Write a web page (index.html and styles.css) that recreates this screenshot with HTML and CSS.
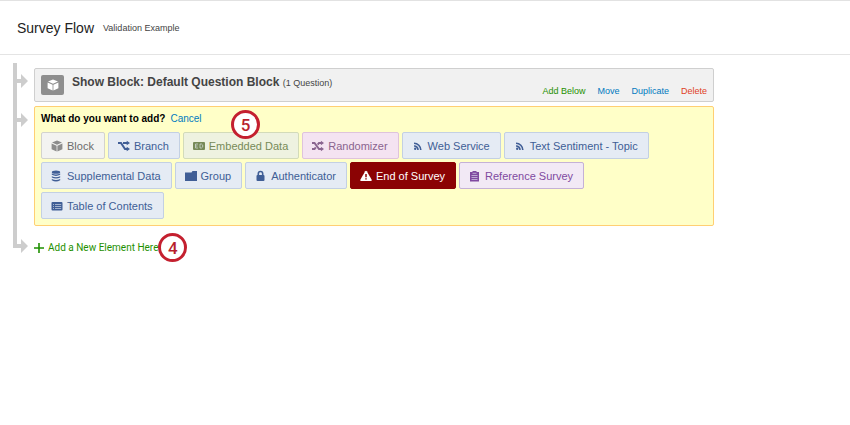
FILE: index.html
```html
<!DOCTYPE html>
<html lang="en">
<head>
    <meta charset="UTF-8">
    <title>Survey Flow</title>
    <meta name="viewport" content="width=device-width, initial-scale=1.0">
    <link rel="stylesheet" href="styles.css">
</head>
<body>

    <header class="page-header">
        <h1>Survey Flow</h1>
        <span class="survey-name">Validation Example</span>
    </header>

    <main class="flow">
        <div class="flow-row">
            <div class="track">
                <svg class="arrow" viewBox="0 0 11 14"><path d="M0 5h4V0l7 7-7 7V9H0z"/></svg>
            </div>
            <section class="block">
                <span class="block-icon">
                    <svg viewBox="0 0 12 12"><path d="M6 .6 11 2.6 6 4.8 1 2.6zM.6 3.5 5.6 5.7v5.9L.6 9.3zM11.4 3.5 6.4 5.7v5.9l5-2.3z"/></svg>
                </span>
                <h2>Show Block: Default Question Block <small>(1 Question)</small></h2>
                <nav class="block-actions">
                    <a class="add" href="#">Add Below</a>
                    <a href="#">Move</a>
                    <a href="#">Duplicate</a>
                    <a class="delete" href="#">Delete</a>
                </nav>
            </section>
        </div>

        <div class="flow-row">
            <div class="track">
                <svg class="arrow" viewBox="0 0 11 14"><path d="M0 5h4V0l7 7-7 7V9H0z"/></svg>
            </div>
            <section class="picker">
                <div class="picker-head">
                    <h3>What do you want to add?</h3>
                    <a href="#">Cancel</a>
                </div>
                <span class="callout callout-over">5</span>
                <div class="elements">
                    <button class="element gray">
                        <svg viewBox="0 0 12 12"><path d="M6 .6 11 2.6 6 4.8 1 2.6zM.6 3.5 5.6 5.7v5.9L.6 9.3zM11.4 3.5 6.4 5.7v5.9l5-2.3z"/></svg>
                        Block
                    </button>
                    <button class="element">
                        <svg viewBox="0 0 12 12"><path class="line" d="M0 3h3l4 6h2.5M5 3h4.5"/><path d="M8.7.7 12 3 8.7 5.3zM8.7 6.7 12 9l-3.3 2.3z"/></svg>
                        Branch
                    </button>
                    <button class="element green">
                        <svg viewBox="0 0 12 12"><rect y="2" width="12" height="8" rx="1"/><path class="cut" d="M5 4H2.500v4H5M2.500 6H4.500M7 4h1.500l1.200 1v2l-1.200 1H7z"/></svg>
                        Embedded Data
                    </button>
                    <button class="element pink">
                        <svg viewBox="0 0 12 12"><path class="line" d="M0 3h2.500l4.500 6h2.500M0 9h2.500l1.300-1.700M5.700 4.700 7 3h2.500"/><path d="M8.900.7 12 3 8.900 5.300zM8.900 6.700 12 9l-3.100 2.300z"/></svg>
                        Randomizer
                    </button>
                    <button class="element">
                        <svg viewBox="0 0 12 12"><circle cx="3.200" cy="8.800" r="1.200"/><path class="thin" d="M2 6a3.800 3.800 0 0 1 4 4M2 3.200a6.800 6.800 0 0 1 6.800 6.800"/></svg>
                        Web Service
                    </button>
                    <button class="element">
                        <svg viewBox="0 0 12 12"><circle cx="3.200" cy="8.800" r="1.200"/><path class="thin" d="M2 6a3.800 3.800 0 0 1 4 4M2 3.200a6.800 6.800 0 0 1 6.800 6.800"/></svg>
                        Text Sentiment - Topic
                    </button>
                    <button class="element">
                        <svg viewBox="0 0 12 12"><ellipse cx="5" cy="2.200" rx="4.200" ry="1.600"/><path d="M.8 3.500q4.200 2 8.400 0v1.300q-4.200 2.200-8.400 0zM.8 6.200q4.200 2 8.400 0v1.300q-4.200 2.200-8.400 0zM.8 8.900q4.200 2 8.400 0v1.300q-4.200 2.600-8.400 0z"/></svg>
                        Supplemental Data
                    </button>
                    <button class="element">
                        <svg viewBox="0 0 12 12"><path d="M0 2.500h6.500l1-1.500H12v10H0z"/></svg>
                        Group
                    </button>
                    <button class="element">
                        <svg viewBox="0 0 12 12"><rect x="1.500" y="5" width="8" height="6" rx="1"/><path class="thin" d="M3.300 5.500V3.700a2.200 2.200 0 0 1 4.400 0v1.800"/></svg>
                        Authenticator
                    </button>
                    <button class="element red">
                        <svg viewBox="0 0 12 12"><path d="M6 .8q.5 0 .8.5l4.900 8.500q.4 1.200-.8 1.200H1.100q-1.200 0-.8-1.200l4.900-8.500Q5.500.8 6 .8z"/><path class="cut" d="M6 4v3.300M6 8.300v1.200"/></svg>
                        End of Survey
                    </button>
                    <button class="element purple">
                        <svg viewBox="0 0 12 12"><path d="M1 2h2.500V1h4v1H10v9.500H1z"/><path class="cut" d="M3.500 3.300h4M2.500 5.500h6M2.500 7.500h6M2.500 9.500h6"/></svg>
                        Reference Survey
                    </button>
                    <button class="element">
                        <svg viewBox="0 0 12 12"><rect x=".5" y="2" width="11" height="8.500" rx="1"/><path class="cut" d="M2 4.500h1M4 4.500h6.200M2 6.500h1M4 6.500h6.200M2 8.500h1M4 8.500h6.200"/></svg>
                        Table of Contents
                    </button>
                </div>
            </section>
        </div>

        <div class="flow-row">
            <div class="track track-end">
                <svg class="arrow" viewBox="0 0 11 14"><path d="M0 5h4V0l7 7-7 7V9H0z"/></svg>
            </div>
            <div class="add-new">
                <a class="add" href="#">
                    <svg viewBox="0 0 10 10"><path d="M5 0v10M0 5h10"/></svg>
                    Add a New Element Here
                </a>
                <span class="callout">4</span>
            </div>
        </div>
    </main>

</body>
</html>
```

FILE: styles.css
```css
* {
    box-sizing: border-box;
}

body {
    margin: 0;
    font-family: "Liberation Sans", Arial, sans-serif;
    font-size: 10px;
    line-height: 14px;
    background: #fff;
    color: #444;
}

h1, h2, h3 {
    margin: 0;
}

a {
    color: #007ac0;
    text-decoration: none;
}

a.add {
    color: #1e9000;
}

a.delete {
    color: #e0401f;
}

/* Header */
.page-header {
    display: flex;
    align-items: center;
    gap: 9px;
    padding: 17px 17px 16px;
    border-top: 1px solid #e2e2e2;
    border-bottom: 1px solid #e4e4e4;
}

.page-header h1 {
    font-size: 14px;
    line-height: 20px;
    font-weight: 400;
    color: #222;
}

.survey-name {
    font-size: 9px;
}

/* Flow tree */
.flow {
    padding: 8px 13px;
}

.flow-row {
    display: flex;
    max-width: 701px;
}

.track {
    flex: none;
    width: 21px;
    padding-top: 11px;
    border-left: 4px solid #cdcdcd;
}

.track-end {
    height: 22px;
    padding-top: 13px;
}

.arrow {
    display: block;
    width: 11px;
    height: 14px;
    fill: #cdcdcd;
}

/* Block */
.block {
    flex: 1;
    display: flex;
    margin-top: 5px;
    height: 34px;
    padding: 6px;
    border: 1px solid #cfcfcf;
    border-radius: 2px;
    background: #f1f1f1;
}

.block-icon {
    display: flex;
    align-items: center;
    justify-content: center;
    width: 23px;
    height: 20px;
    border-radius: 2px;
    background: #8e8e8e;
}

.block-icon svg {
    width: 12px;
    height: 12px;
    fill: #fff;
}

.block h2 {
    margin-left: 8px;
    font-size: 12px;
    line-height: 14px;
    font-weight: 700;
    color: #444;
}

.block h2 small {
    font-size: 9px;
    font-weight: 400;
}

.block-actions {
    display: flex;
    align-self: flex-end;
    gap: 12px;
    margin-left: auto;
    font-size: 9px;
    line-height: 8px;
}

/* Element picker */
.picker {
    flex: 1;
    position: relative;
    margin-top: 4px;
    padding: 5px 6px 6px;
    border: 1px solid #ffcf73;
    border-radius: 2px;
    background: #ffffc8;
}

.picker-head {
    display: flex;
    gap: 5px;
}

.picker-head h3 {
    font-size: 10px;
    font-weight: 700;
    color: #000;
}

.elements {
    display: flex;
    flex-wrap: wrap;
    gap: 3px;
    margin-top: 6px;
}

.element {
    display: flex;
    align-items: center;
    gap: 4px;
    height: 27px;
    padding: 0 10px 0 9px;
    border: 1px solid #c3d0e3;
    border-radius: 2px;
    background: #e5ebf4;
    color: #405e96;
    font-family: inherit;
    font-size: 11px;
    line-height: 16px;
    white-space: nowrap;
    cursor: pointer;
}

.element svg {
    width: 12px;
    height: 12px;
    fill: currentColor;
}

.element .line,
.element .thin,
.element .cut {
    fill: none;
    stroke: currentColor;
    stroke-width: 2;
}

.element .thin {
    stroke-width: 1.6;
}

.element .cut {
    stroke: #e5ebf4;
    stroke-width: 0.6;
}

.element.gray {
    background: #f3f3f1;
    border-color: #d3d3cd;
    color: #6c6c6c;
}

.element.gray svg {
    fill: #8c8c8c;
}

.element.green {
    background: #eef2e0;
    border-color: #d3dbb9;
    color: #778a58;
}

.element.pink {
    background: #f4e3f1;
    border-color: #dfc3dc;
    color: #8a648f;
}

.element.red {
    background: #8b0304;
    border-color: #8b0304;
    color: #fff;
}

.element.red .cut {
    stroke: #8b0304;
    stroke-width: 1.5;
}

.element.purple {
    background: #f2e9f5;
    border-color: #c5b1d6;
    color: #8049a0;
}

/* Add link */
.add-new {
    display: flex;
    align-items: center;
    margin-top: 7px;
}

.add-new a {
    display: flex;
    align-items: center;
    gap: 4px;
    font-family: Roboto, sans-serif;
}

.add-new svg {
    width: 10px;
    height: 10px;
    stroke: #1e9000;
    stroke-width: 1.6;
}

/* Numbered callouts */
.callout {
    display: flex;
    align-items: center;
    justify-content: center;
    width: 29px;
    height: 29px;
    border: 3px solid #c4202f;
    border-radius: 50%;
    background: #fff;
    color: #b81f2d;
    font-family: Roboto, sans-serif;
    font-size: 17px;
    font-weight: 500;
}

.callout-over {
    position: absolute;
    top: 3px;
    left: 196px;
}
```
